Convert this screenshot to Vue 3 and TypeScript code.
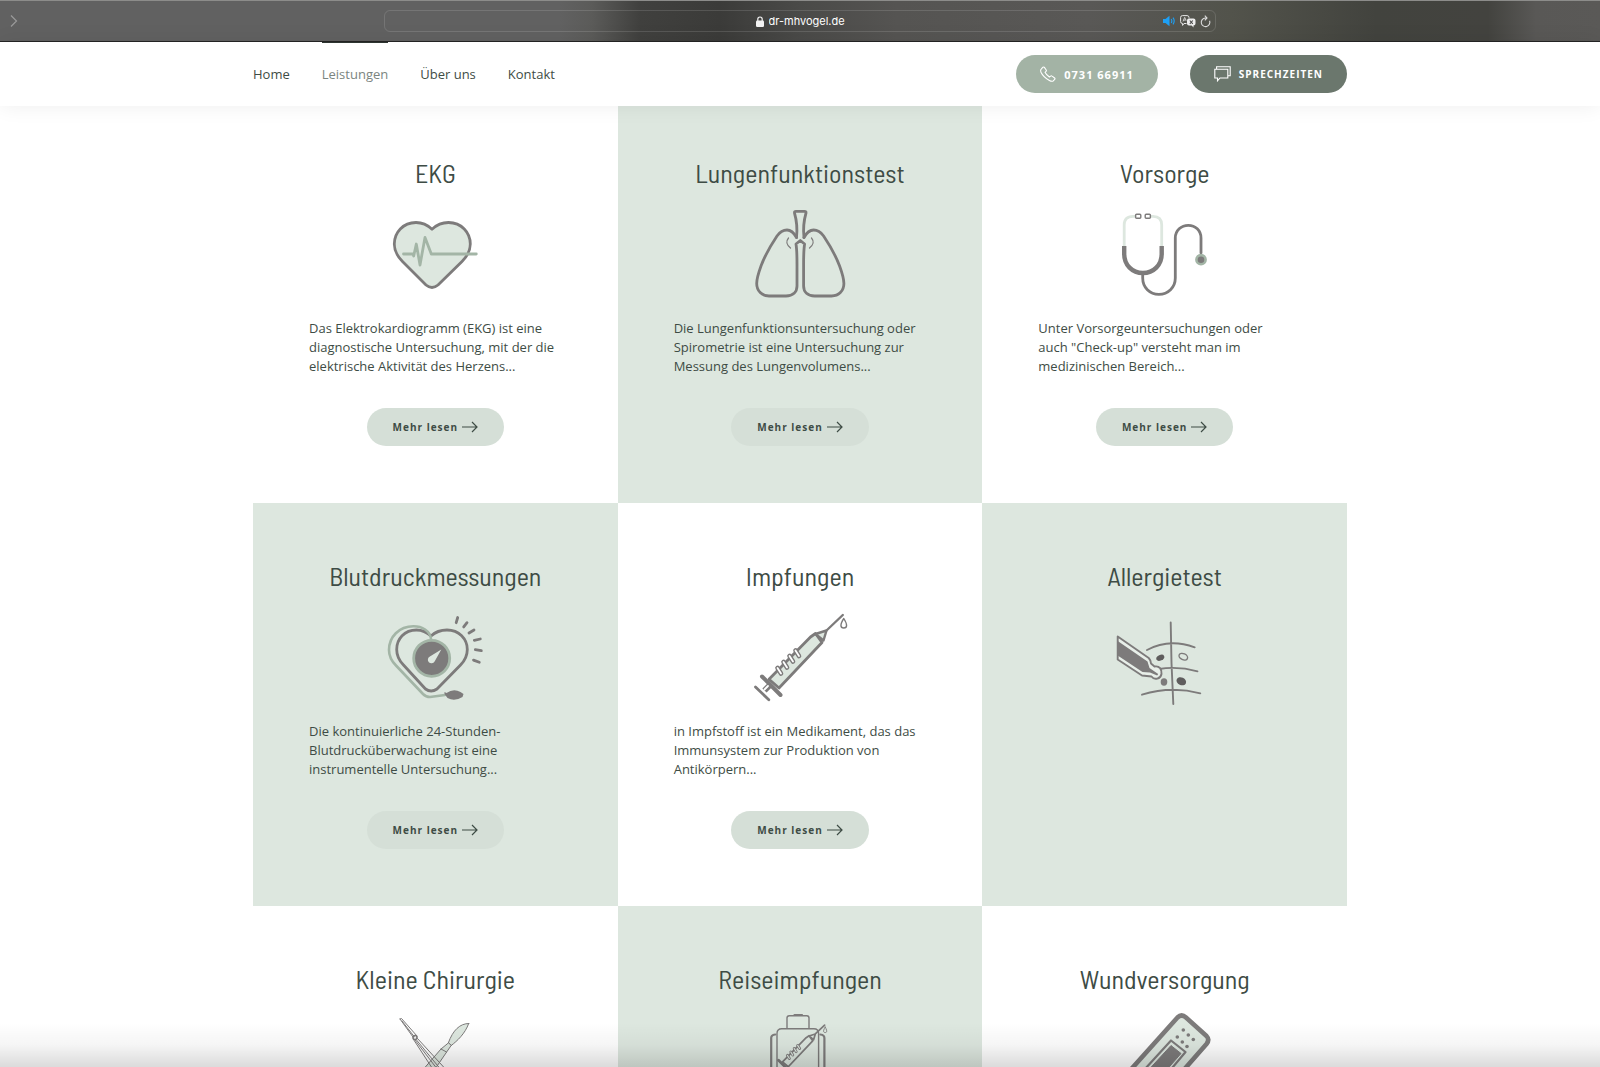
<script setup lang="ts">
interface Service {
  title: string
  icon: string
  text?: string
}

const navItems: { label: string; active?: boolean }[] = [
  { label: 'Home' },
  { label: 'Leistungen', active: true },
  { label: 'Über uns' },
  { label: 'Kontakt' },
]

const services: Service[] = [
  { title: 'EKG', icon: 'heart', text: 'Das Elektrokardiogramm (EKG) ist eine diagnostische Untersuchung, mit der die elektrische Aktivität des Herzens...' },
  { title: 'Lungenfunktionstest', icon: 'lungs', text: 'Die Lungenfunktionsuntersuchung oder Spirometrie ist eine Untersuchung zur Messung des Lungenvolumens...' },
  { title: 'Vorsorge', icon: 'stethoscope', text: 'Unter Vorsorgeuntersuchungen oder auch "Check-up" versteht man im medizinischen Bereich...' },
  { title: 'Blutdruckmessungen', icon: 'pressure', text: 'Die kontinuierliche 24-Stunden-Blutdrucküberwachung ist eine instrumentelle Untersuchung...' },
  { title: 'Impfungen', icon: 'syringe', text: 'in Impfstoff ist ein Medikament, das das Immunsystem zur Produktion von Antikörpern...' },
  { title: 'Allergietest', icon: 'allergy' },
  { title: 'Kleine Chirurgie', icon: 'surgery' },
  { title: 'Reiseimpfungen', icon: 'travel' },
  { title: 'Wundversorgung', icon: 'plaster' },
]
</script>

<template>
  <div class="page">
    <div class="browser">
      <button class="icon-btn forward" type="button" aria-label="Vorwärts">
        <svg width="8" height="14" viewBox="0 0 8 14" fill="none" stroke="#9a9a9a" stroke-width="1.2"><path d="M1 1.5 6.5 7 1 12.5" /></svg>
      </button>
      <div class="address">
        <div class="address-site">
          <svg width="8" height="11" viewBox="0 0 8 11"><rect y="4.5" width="8" height="6.5" rx="1.2" fill="#f2f2f2" /><path d="M1.800 5V3.200a2.200 2.200 0 0 1 4.400 0V5" fill="none" stroke="#f2f2f2" stroke-width="1.2" /></svg>
          <input class="url" type="text" value="dr-mhvogel.de" aria-label="Adresse" />
        </div>
        <div class="address-tools">
          <button class="icon-btn" type="button" aria-label="Ton">
            <svg width="13" height="12" viewBox="0 0 13 12"><path d="M0 4h2.500L6.500.8v10.400L2.500 8H0z" fill="#1ea0f5" /><path d="M8.200 4q1.300 2 0 4M10 2.600q2.400 3.400 0 6.800" fill="none" stroke="#1ea0f5" stroke-width="1.1" /></svg>
          </button>
          <button class="icon-btn" type="button" aria-label="Übersetzen">
            <svg width="16" height="13" viewBox="0 0 16 13"><path d="M6.500 8.500H4L2.600 10.400V8.500Q.6 8.500.6 6.600V2.500Q.6.6 2.500.6h4.600Q9 .6 9 2.500v.8" fill="none" stroke="#e8e8e8" /><path d="M3 6.400 4.700 2.400 6.200 5.600M3.600 5.100h2" fill="none" stroke="#e8e8e8" stroke-width=".8" /><path d="M9 3.600h4.500q2 0 2 2v3q0 2-2 2v2L11.600 10.600H9q-2 0-2-2v-3q0-2 2-2z" fill="#ededed" /><path d="m9.800 5.500 3 3.400M12.800 5.500l-3 3.400" stroke="#4a4a49" stroke-width="1.1" /></svg>
          </button>
          <button class="icon-btn" type="button" aria-label="Neu laden">
            <svg width="11" height="13" viewBox="0 0 11 13" fill="none" stroke="#dcdcdc" stroke-width="1.1"><path d="M9.600 5.800A4.300 4.300 0 1 1 5.300 3h1.400M4.800.6 7 3 4.800 5.300" /></svg>
          </button>
        </div>
      </div>
    </div>

    <header class="site-header">
      <div class="container header-row">
        <nav class="nav">
          <a v-for="item in navItems" :key="item.label" href="#" :class="{ active: item.active }">{{ item.label }}</a>
        </nav>
        <div class="actions">
          <a class="pill phone" href="tel:073166911">
            <svg width="16" height="16" viewBox="0 0 16 16" fill="none" stroke="#fff" stroke-width="1.1" stroke-linejoin="round"><path d="M1.200 3.200 3 1.200q.8-.6 1.400.2L6.200 4q.5.8-.2 1.400l-1 .9q1.200 2.500 4.400 4.700l1.200-.9q.8-.6 1.500 0l2.500 1.900q.8.7.1 1.400l-1.500 1.500q-1.400.8-3.800-.5Q3.200 11 1 6.200.2 4.200 1.200 3.200z" /></svg>
            0731 66911
          </a>
          <button class="pill hours" type="button">
            <svg width="17" height="16" viewBox="0 0 17 16" fill="none" stroke="#fff" stroke-width="1.1"><path d="M.8 3.200h13v8.800H6L3.500 14.800V12H.8z" /><path d="M2.600 3V.8h13.600v9h-2.200" /></svg>
            SPRECHZEITEN
          </button>
        </div>
      </div>
    </header>

    <main class="container grid">
      <article v-for="service in services" :key="service.title" class="card">
        <h2>{{ service.title }}</h2>
        <svg class="art" width="120" height="100" viewBox="0 0 120 100" fill="none" stroke="#7d7b7b" stroke-width="2.8" stroke-linecap="round" stroke-linejoin="round" aria-hidden="true">
          <g v-if="service.icon === 'heart'">
            <path fill="#dde7df" d="M57 22.300C52 17.500 46.500 15.500 41 15.500 28 15.500 19.300 25.500 19.300 37c0 7.500 3.200 12.500 8.200 17.500L51 78q6 5 12 0L87 54.500c5-5 8.300-10 8.300-17.500 0-11.500-8.800-21.500-21.800-21.500-5.500 0-11.500 2-16.500 6.800z" />
            <path stroke="#a3b5a6" d="M28.500 47h9.500l.7 2 2.600-12L45 58l5-27.500L56.300 47h45" />
          </g>
          <g v-else-if="service.icon === 'lungs'">
            <path d="M56.500 30.500C57.500 22 56.500 13 54.500 6q-.3-1.700 1.500-1.700h8.500q1.800 0 1.500 1.700C64 13 63 22 64 30.500" />
            <path d="M56.500 30.500C53.500 25 50 23 47 23c-4.500 0-7.500 2.500-10 6-7 10.500-13 22-16 30-2 5.500-4.300 13-4.300 17.500C16.700 84 22 89 29 89h17c7 0 11-4 11-10V57c0-8 0-14-1-20l4.300-3.500L64.600 37c-1 6-1 12-1 20v22c0 6 4 10 11 10h17c7 0 12.300-5 12.300-12.500 0-4.500-2.300-12-4.300-17.500-3-8-9-19.500-16-30-2.500-3.500-5.500-6-10-6-3 0-6.600 2-9.600 7.500" />
            <path stroke-width="1.2" d="M48.500 31q-4.200 5 2 10M71.500 31q4.200 5-2 10" />
          </g>
          <g v-else-if="service.icon === 'stethoscope'">
            <path stroke="#dde7df" d="M19.200 39V18q0-8.700 8.700-8.700H30M46 9.300h2q8.700 0 8.700 8.700v21" />
            <g stroke-width="1.4"><rect x="30.6" y="7.3" width="5.2" height="4" rx="1" /><rect x="40.2" y="7.3" width="5.2" height="4" rx="1" /></g>
            <path d="M37.700 67v4c0 9.500 7 16.300 16.200 16.300S70.300 80.500 70.300 71V31c0-7.500 6-12.700 13-12.700S96 23.500 96 31v15" />
            <path stroke-width="4.4" stroke-linecap="butt" d="M19.200 39v8c0 11 8 19 18.700 19S56.700 58 56.700 47v-8" />
            <circle cx="96" cy="52.7" r="4.6" fill="#7d7b7b" stroke="#a3b5a6" stroke-width="2.6" />
          </g>
          <g v-else-if="service.icon === 'pressure'">
            <path d="M56 26C51.500 21.800 46.500 20 41.500 20 29.500 20 21.700 29 21.700 39.500c0 7 2.300 11 6.800 15.500L50.500 79q5.500 4 11.500 0L85.500 55c4.500-4.500 6.800-8.500 6.800-15.500C92.300 29 84 20 72 20c-5 0-11.500 1.800-16 6z" />
            <path stroke="#a3b5a6" stroke-width="2.6" d="M56 29C55 20.500 47 16.300 38.500 16.300 24 16.300 14 27 14 40c0 7 3 11.500 7 15.500L48 84q3 3 7 3l15-2" />
            <circle cx="56.7" cy="48.3" r="18" fill="#7d7b7b" stroke="#a3b5a6" />
            <path fill="#dde7df" stroke="none" d="M66.300 39.500 59.600 51.500a3.600 3.600 0 1 1-4.700-5z" />
            <path fill="#7d7b7b" stroke="none" d="m69.500 82 2 1q7-5 14-1l3 2-1 3q-8 5-15 1l-3-4z" />
            <path d="M82.700 7.500 81.200 12.700M92 12.700l-3.300 4.200M99 20l-5 3M105.300 29l-6 1.300M106.300 40.700l-6-1M104.300 52.300l-5.800-2.200" />
          </g>
          <g v-else-if="service.icon === 'syringe'">
            <path d="M30 75 24.500 80.500" stroke-width="6" stroke-linecap="butt" />
            <path fill="#dde7df" d="M29 69.300 70.500 27l5-3.500 6.500 9-43 45.500z" />
            <path fill="#dde7df" stroke-width="2.4" d="m75.500 24 11-3.500-3 10z" />
            <path stroke-width="2.4" d="M86.500 20.500 102.800 5" />
            <path stroke-width="4" d="m22 66.500 18.500 18.500" />
            <path stroke="#fff" stroke-width="1.8" d="m28 76-3.500 3.500" />
            <path d="m15.500 77 13.300 12.800" />
            <path stroke-width="4.6" d="m37.500 58 3.500 5.500M43.500 52l3.500 5.500M49.500 46l3.500 5.500M55.500 40.500l3.500 5.500" />
            <path stroke="#fff" stroke-width="1.8" d="m37.500 58 3.500 5.500M43.500 52l3.500 5.500M49.500 46l3.500 5.500M55.500 40.500l3.500 5.500" />
            <path stroke-width="1.4" d="M103.800 8.500c-4 6-3.600 9.500 0 9.500s3.800-3.500 0-9.500z" />
          </g>
          <g v-else-if="service.icon === 'allergy'" stroke-width="1.9">
            <path d="M65.700 12.500q.3 40 2.600 81.500M42 40q22-12 47.700-2.700M54 59q19-3 38.500 2.300M37 84.700q29-9 58.300-1.400" />
            <g stroke="none" fill="#5f5d5d"><ellipse cx="55.3" cy="47.7" rx="4.2" ry="2.8" transform="rotate(-25 55.3 47.7)" /><ellipse cx="76.3" cy="71.3" rx="5" ry="3.8" transform="rotate(25 76.3 71.3)" /><ellipse cx="59" cy="72" rx="3.3" ry="3.7" fill="#7d7b7b" /></g>
            <ellipse cx="78.3" cy="46.7" rx="4.5" ry="3" transform="rotate(25 78.3 46.7)" stroke-width="1.4" />
            <path fill="#e8efe9" d="M12.700 26.500 43.700 48q2 2 2.300 5.500l3.500 3c5-1 7.500 3 7 7.500-1 5-7 6.500-10 2.500L37 65.500l-24.300-16z" />
            <path fill="#7d7b7b" stroke="none" d="M12.700 31 42.500 51.500 44.500 58l8.700 6-1 1.500-7.200-3-7.500-.5L12.700 45.500z" />
          </g>
          <g v-else-if="service.icon === 'surgery'" stroke-width="1">
            <path fill="#dde7df" d="M93.700 10.500C85 10.500 78 17 73.300 30l2.700 2.700C82 28 90 21 93.700 10.500z" />
            <path fill="#dde7df" d="M73.300 30 66 36 46 59h12l14-20.500 4-5.800zM66 36l5.500 3" />
            <path d="M25 6l1.500-.5 15.500 17.500M25 6l13 18M27 8l12.500 16M42.500 25.500 75 61M40 27l26 34M38.500 26.500 61 61M41.500 27l28 34" />
            <circle cx="40" cy="24.5" r="2" stroke-width="1.6" />
          </g>
          <g v-else-if="service.icon === 'travel'" stroke-width="1.4">
            <path d="M47 15.500V5q0-2.300 2.300-2.300h17.500Q69 2.700 69 5v10.500M37 80V20.500q0-4.800 4.800-4.800h32q4.800 0 4.800 4.800V80" />
            <path stroke-width="2.2" d="M54.500 2h7.500M31.200 80V25q0-3 4-3.500M84.400 80V25q0-3-4-3.500" />
            <g transform="translate(26 9.3) scale(.57)" stroke-width="3">
              <path d="M29 69.300 70.500 27l5-3.500 6.500 9-43 45.500zM75.500 24l11-3.500-3 10zM86.500 20.500 102.800 5" />
              <path stroke-width="5" d="m22 66.500 18.500 18.500" />
              <path stroke-width="5" d="m37.500 58 3.500 5.500M43.500 52l3.500 5.500M49.500 46l3.500 5.500M55.500 40.500l3.500 5.500" />
              <path stroke="#dde7df" stroke-width="2" d="m37.500 58 3.500 5.500M43.500 52l3.500 5.500M49.500 46l3.500 5.500M55.500 40.500l3.500 5.500" />
              <path stroke-width="1.6" d="M103.800 8.500c-4 6-3.600 9.500 0 9.500s3.800-3.500 0-9.500z" />
            </g>
          </g>
          <g v-else stroke-width="4.6">
            <path fill="#dde7df" d="M12 72 72.500 4.500q4-4 8.500 0l20.500 18.500q3.500 3.700 0 8L55 84z" />
            <path fill="#dde7df" stroke-width="2.2" d="m29 68 37-40.500L80.500 39 47 79z" />
            <path fill="#7d7b7b" stroke-width="1" d="m33 68.500 33-36 10 8L45 76z" />
            <g stroke="none" fill="#7d7b7b"><circle v-for="(p, i) in [[78.3, 17], [83.3, 22], [88.3, 26.5], [72.3, 24], [77.3, 29], [82, 33.5]]" :key="i" :cx="p[0]" :cy="p[1]" r="1.8" /></g>
          </g>
        </svg>
        <template v-if="service.text">
          <p>{{ service.text }}</p>
          <a class="more" href="#">
            Mehr lesen
            <svg width="16" height="12" viewBox="0 0 16 12" fill="none" stroke="#3e4c45" stroke-width="1.2"><path d="M0 6h15M10 1l5 5-5 5" /></svg>
          </a>
        </template>
      </article>
    </main>
    <div class="fade"></div>
  </div>
</template>

<style>
body {
  margin: 0;
  background: #fff;
}
</style>

<style scoped>
.page {
  position: relative;
  height: 100vh;
  overflow: hidden;
  font-family: 'Open Sans', 'Noto Sans', sans-serif;
  color: #3e4c45;
  background: #fff;
}
.browser {
  box-sizing: border-box;
  height: 42px;
  display: flex;
  align-items: center;
  justify-content: center;
  border-top: 1px solid #8c8c8a;
  border-bottom: 1px solid #242424;
  background: linear-gradient(90deg, #616161 0%, #616161 35%, #5b5b59 37%, #40403e 40%, #3b3b39 45%, #4a4a48 50%, #555452 56%, #595856 68%, #52534b 77%, #42433e 86%, #43433f 93%, #595856 96%, #5a5957 100%);
}
.icon-btn {
  display: flex;
  padding: 0;
  border: 0;
  background: none;
}
.forward {
  position: absolute;
  left: 10px;
}
.address {
  position: relative;
  box-sizing: border-box;
  width: 52%;
  height: 22px;
  display: flex;
  align-items: center;
  justify-content: center;
  border: 1px solid rgba(255, 255, 255, 0.13);
  border-radius: 6px;
}
.address-site {
  display: flex;
  align-items: center;
  gap: 5px;
}
.url {
  width: 76px;
  padding: 0;
  border: 0;
  background: none;
  color: #fff;
  font: 400 11px/16px Inter, sans-serif;
}
.address-tools {
  position: absolute;
  right: 4px;
  display: flex;
  align-items: center;
  gap: 4px;
}
.container {
  width: calc(100% - 48px);
  max-width: 1094px;
  margin: 0 auto;
}
.site-header {
  position: relative;
  z-index: 1;
  background: #fff;
  box-shadow: 0 0 20px rgba(0, 0, 0, 0.07);
}
.header-row {
  height: 64px;
  display: flex;
  align-items: center;
  justify-content: space-between;
}
.nav {
  display: flex;
  gap: 32px;
}
.nav a {
  font-size: 13px;
  line-height: 64px;
  color: #3e4c45;
  text-decoration: none;
}
.nav a.active {
  color: #7b857f;
  box-shadow: inset 0 1px #2d3531;
}
.actions {
  display: flex;
  gap: 32px;
}
.pill,
.more {
  box-sizing: border-box;
  height: 38px;
  display: flex;
  align-items: center;
  padding: 0 24px;
  border: 0;
  border-radius: 19px;
  font-family: inherit;
  font-size: 10px;
  font-weight: 700;
  letter-spacing: 1px;
  text-decoration: none;
  white-space: nowrap;
}
.pill {
  gap: 8px;
  color: #fff;
}
.phone {
  background: #a3b3a5;
  font-size: 11px;
}
.hours {
  background: #6b776d;
}
.grid {
  display: grid;
  grid-template-columns: repeat(3, 1fr);
  margin-top: -6px;
}
.card {
  box-sizing: border-box;
  min-height: 403px;
  display: flex;
  flex-direction: column;
  align-items: center;
  padding: 58px 56px 56px;
}
.card:nth-child(even) {
  background: #dde7df;
}
h2 {
  margin: 0 0 19px;
  font: 400 26px/30px 'Barlow Semi Condensed', 'Roboto Condensed', 'Liberation Sans Narrow', Roboto, sans-serif;
}
.art {
  flex: none;
}
p {
  align-self: stretch;
  margin: 12px 0 32px;
  font-size: 13px;
  line-height: 19px;
}
.more {
  gap: 4px;
  padding: 0 26px;
  background: #d5dfd7;
  color: #3e4c45;
}
.fade {
  position: absolute;
  z-index: 2;
  inset: auto 0 0;
  height: 44px;
  background: linear-gradient(rgba(0, 0, 0, 0), rgba(0, 0, 0, 0.04) 50%, rgba(0, 0, 0, 0.14));
  pointer-events: none;
}
</style>
